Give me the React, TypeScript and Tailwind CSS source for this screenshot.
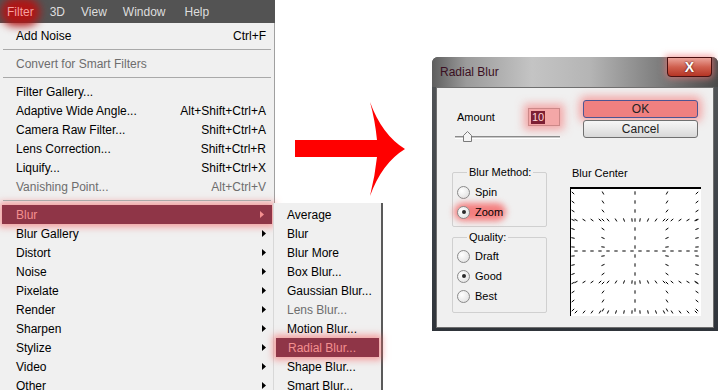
import React from 'react';

type Row = { sep?: boolean; label?: string; keys?: string; off?: boolean; sub?: boolean; on?: boolean };

const filterMenu: Row[] = [
  { label: 'Add Noise', keys: 'Ctrl+F' },
  { sep: true },
  { label: 'Convert for Smart Filters', off: true },
  { sep: true },
  { label: 'Filter Gallery...' },
  { label: 'Adaptive Wide Angle...', keys: 'Alt+Shift+Ctrl+A' },
  { label: 'Camera Raw Filter...', keys: 'Shift+Ctrl+A' },
  { label: 'Lens Correction...', keys: 'Shift+Ctrl+R' },
  { label: 'Liquify...', keys: 'Shift+Ctrl+X' },
  { label: 'Vanishing Point...', keys: 'Alt+Ctrl+V', off: true },
  { sep: true },
  { label: 'Blur', sub: true, on: true },
  { label: 'Blur Gallery', sub: true },
  { label: 'Distort', sub: true },
  { label: 'Noise', sub: true },
  { label: 'Pixelate', sub: true },
  { label: 'Render', sub: true },
  { label: 'Sharpen', sub: true },
  { label: 'Stylize', sub: true },
  { label: 'Video', sub: true },
  { label: 'Other', sub: true },
];

const blurMenu: Row[] = [
  { label: 'Average' },
  { label: 'Blur' },
  { label: 'Blur More' },
  { label: 'Box Blur...' },
  { label: 'Gaussian Blur...' },
  { label: 'Lens Blur...', off: true },
  { label: 'Motion Blur...' },
  { label: 'Radial Blur...', on: true },
  { label: 'Shape Blur...' },
  { label: 'Smart Blur...' },
];

const Caret = ({ on }: { on?: boolean }) => (
  <svg width="4" height="7" viewBox="0 0 4 7" className="shrink-0">
    <path d="M0 0 L4 3.5 L0 7 Z" fill={on ? '#f49090' : '#000'} />
  </svg>
);

const MenuRow = ({ row, pl }: { row: Row; pl: string }) => {
  if (row.sep) {
    return (
      <div className="h-[9px] flex items-center px-[3px]">
        <div className="h-px w-full bg-[#a9a9a9]" />
      </div>
    );
  }
  return (
    <div
      className={
        'h-[19px] flex items-center pr-[8px] ' +
        pl +
        (row.on
          ? ' bg-[#8f3547] text-[#f49090] shadow-[0_0_7px_3px_rgba(245,90,90,0.55)] mr-[2px] ml-[2px]'
          : row.off
          ? ' text-[#6d6d6d]'
          : ' text-black')
      }
    >
      <span className="whitespace-nowrap">{row.label}</span>
      <span className="ml-auto whitespace-nowrap">{row.keys}</span>
      {row.sub && <Caret on={row.on} />}
    </div>
  );
};

const Radio = ({ checked }: { checked?: boolean }) => (
  <span className="w-[13px] h-[13px] rounded-full border border-[#8a8a8a] bg-[radial-gradient(circle_at_35%_35%,#ffffff,#dcdcdc)] flex items-center justify-center shrink-0">
    {checked && <span className="w-[4px] h-[4px] rounded-full bg-[#2a2a2a]" />}
  </span>
);

const BlurCenter = () => {
  const cx = 65;
  const cy = 64;
  const segs: number[][] = [];
  const add = (x: number, y: number) => {
    const dx = x - cx;
    const dy = y - cy;
    const d = Math.hypot(dx, dy);
    if (d < 3) return;
    const ux = (dx / d) * 1.7;
    const uy = (dy / d) * 1.7;
    segs.push([x - ux, y - uy, x + ux, y + uy]);
  };
  [3, 33, 65, 97, 127].forEach((x) => {
    for (let y = 6; y <= 126; y += 9) add(x, y);
  });
  [33, 64, 95, 125].forEach((y) => {
    for (let x = 6; x <= 127; x += 8) add(x, y);
  });
  return (
    <svg width="131" height="129" viewBox="0 0 131 129" className="block bg-white">
      {segs.map((s, i) => (
        <line key={i} x1={s[0]} y1={s[1]} x2={s[2]} y2={s[3]} stroke="#000" strokeWidth="1" />
      ))}
      <rect x="0" y="0" width="131" height="2" fill="#000" />
      <rect x="0" y="0" width="1" height="129" fill="#000" />
    </svg>
  );
};

export default function App() {
  return (
    <div className="w-[718px] h-[390px] overflow-hidden bg-white flex font-['Liberation_Sans',Arial,sans-serif] text-[12px]">
      {/* left side: Photoshop filter menu */}
      <div className="relative w-[432px] shrink-0">
        <div className="w-[275px] h-[23px] bg-[#535353] flex items-center pl-[7px] gap-[16px] text-[#dedede]">
          <span className="relative">
            <span className="absolute -left-[6px] -right-[6px] -top-[5px] -bottom-[5px] rounded-full bg-[#b01515] blur-[4px]" />
            <span className="relative text-[#f6a0a0]">Filter</span>
          </span>
          <span>3D</span>
          <span>View</span>
          <span>Window</span>
          <span className="ml-[3px]">Help</span>
        </div>
        <div className="w-[275px] h-[367px] bg-[#f0f0f0] border-r border-[#a0a0a0] pt-[3px]">
          {filterMenu.map((r, i) => (
            <MenuRow key={i} row={r} pl={r.on ? 'pl-[14px]' : 'pl-[16px]'} />
          ))}
        </div>

        {/* submenu */}
        <div className="absolute left-[273px] top-[203px] w-[110px] h-[190px] bg-[#f0f0f0] border-l border-[#d8d8d8] border-r-2 border-r-[#5a5a5a] pt-[2px]">
          {blurMenu.map((r, i) => (
            <MenuRow key={i} row={r} pl={r.on ? 'pl-[12px]' : 'pl-[13px]'} />
          ))}
        </div>

        {/* red arrow */}
        <svg
          className="absolute left-[290px] top-[95px]"
          width="120"
          height="105"
          viewBox="290 95 120 105"
        >
          <path
            d="M295 140 L377 140 Q375 120 370 102 Q382 135 405 149 Q382 163 370 196 Q375 176 377 157 L295 157 Z"
            fill="#ff0000"
          />
        </svg>
      </div>

      {/* right side: Radial Blur dialog */}
      <div className="relative mt-[57px] w-[286px] h-[274px] rounded-t-[6px] bg-[linear-gradient(180deg,#555759_0%,#3b4046_60%,#2f343a_100%)] px-[4px] pb-[2px] flex flex-col">
        <div className="h-[30px] -mx-[4px] px-[8px] rounded-t-[6px] flex items-center bg-[linear-gradient(90deg,#5e5e5e_0%,#9b9b9b_12%,#c4c4c4_35%,#b5b5b5_55%,#7c7c7c_80%,#4a4a4a_100%)] text-[#3a0f22]">
          Radial Blur
        </div>
        <div className="absolute right-[6px] top-0 w-[45px] h-[20px] rounded-b-[4px] border border-[#4a1010] bg-[linear-gradient(180deg,#eba49b_0%,#d0604f_50%,#b53525_100%)] shadow-[0_0_6px_2px_rgba(240,120,120,0.6)] flex items-center justify-center">
          <span className="text-white font-bold text-[14px] leading-none [text-shadow:0_0_2px_#300]">X</span>
        </div>

        <div className="h-[241px] bg-[#f0f0f0] border border-[#6f6f6f] flex flex-col">
          {/* top row */}
          <div className="h-[50px] flex pt-[12px] pl-[18px] pr-[15px]">
            <div className="w-[105px] flex flex-col">
              <div className="flex items-center h-[18px] mt-[8px]">
                <span className="ml-[2px] text-[11px] text-black">Amount</span>
                <span className="ml-auto w-[32px] h-[18px] border border-[#c88] bg-[#f4a7a7] shadow-[0_0_8px_4px_rgba(245,110,110,0.55)] flex items-center pl-[2px]">
                  <span className="bg-[#7d1f33] text-[#ffd6d6] text-[11px] leading-[13px] px-px">10</span>
                </span>
              </div>
              <div className="relative mt-[7px] h-[10px]">
                <div className="absolute left-0 right-0 top-[3px] h-[3px] border-t border-[#8a8a8a] border-b border-b-white bg-[#c8c8c8]" />
                <svg className="absolute left-[8px] top-[-2px]" width="9" height="11" viewBox="0 0 9 11">
                  <path d="M4.5 0.5 L8.5 4.5 L8.5 10.5 L0.5 10.5 L0.5 4.5 Z" fill="#f4f4f4" stroke="#7a7a7a" />
                </svg>
              </div>
            </div>
            <div className="ml-auto flex flex-col gap-[2px] w-[115px]">
              <div className="h-[18px] rounded-[3px] border border-[#4c5593] bg-[#ef8080] shadow-[0_0_8px_4px_rgba(245,110,110,0.55)] flex items-center justify-center text-[#222] text-[12px]">
                OK
              </div>
              <div className="h-[18px] rounded-[3px] border border-[#707070] bg-[linear-gradient(180deg,#f6f6f6_0%,#e8e8e8_50%,#d8d8d8_100%)] flex items-center justify-center text-[#222] text-[12px]">
                Cancel
              </div>
            </div>
          </div>

          {/* bottom row */}
          <div className="flex mt-[27px] pl-[15px] text-[11px] text-black">
            <div className="w-[95px] pt-[7px] flex flex-col gap-[10px]">
              <div className="relative h-[55px] border border-[#d0d0d0] rounded-[2px] pt-[9px] pl-[4px]">
                <span className="absolute left-[14px] -top-[7px] bg-[#f0f0f0] px-[2px] leading-[13px]">Blur Method:</span>
                <div className="h-[20px] flex items-center gap-[5px]">
                  <Radio />
                  <span>Spin</span>
                </div>
                <div className="relative h-[20px] flex items-center gap-[5px]">
                  <span className="absolute -left-[3px] w-[52px] top-[1px] bottom-[1px] rounded-full bg-[#f47f7f] blur-[3px]" />
                  <span className="relative flex items-center gap-[5px]">
                    <Radio checked />
                    <span>Zoom</span>
                  </span>
                </div>
              </div>
              <div className="relative h-[76px] border border-[#d0d0d0] rounded-[2px] pt-[8px] pl-[4px]">
                <span className="absolute left-[14px] -top-[7px] bg-[#f0f0f0] px-[2px] leading-[13px]">Quality:</span>
                <div className="h-[20px] flex items-center gap-[5px]">
                  <Radio />
                  <span>Draft</span>
                </div>
                <div className="h-[20px] flex items-center gap-[5px]">
                  <Radio checked />
                  <span>Good</span>
                </div>
                <div className="h-[20px] flex items-center gap-[5px]">
                  <Radio />
                  <span>Best</span>
                </div>
              </div>
            </div>
            <div className="ml-[23px] flex flex-col">
              <span className="h-[16px] leading-[16px] pl-[2px]">Blur Center</span>
              <div className="mt-[6px]">
                <BlurCenter />
              </div>
            </div>
          </div>
        </div>
      </div>
    </div>
  );
}
